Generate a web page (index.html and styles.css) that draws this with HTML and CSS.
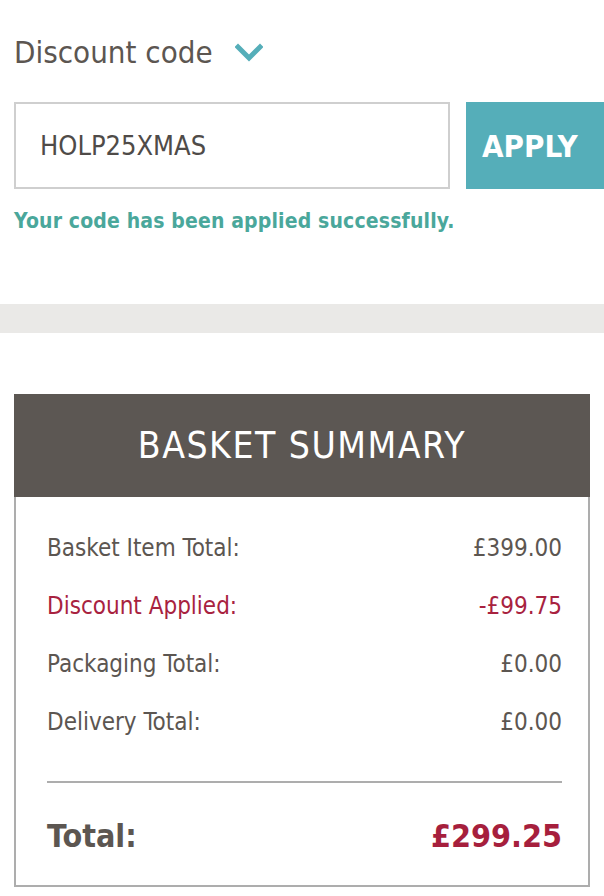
FILE: index.html
```html
<!DOCTYPE html>
<html lang="en">

<head>
    <meta charset="UTF-8">
    <meta name="viewport" content="width=device-width, initial-scale=1.0">
    <title>Basket</title>
    <link rel="stylesheet" href="styles.css">
</head>

<body>
    <div class="discount">
        <div class="discount-title">
            <span>Discount code</span>
            <svg class="chevron" width="28" height="20" viewBox="0 0 28 20">
                <path d="M3 4 L14 15 L25 4" fill="none" stroke="#55aeb9" stroke-width="5" stroke-linecap="square" />
            </svg>
        </div>
        <form class="code-form" action="">
            <input class="code-input" type="text" value="HOLP25XMAS">
            <button class="apply-btn" type="submit">APPLY</button>
        </form>
        <p class="success">Your code has been applied successfully.</p>
    </div>

    <div class="divider-band"></div>

    <div class="summary">
        <div class="summary-head">BASKET SUMMARY</div>
        <div class="summary-body">
            <div class="row">
                <span>Basket Item Total:</span>
                <span>&pound;399.00</span>
            </div>
            <div class="row discount-row">
                <span>Discount Applied:</span>
                <span>-&pound;99.75</span>
            </div>
            <div class="row">
                <span>Packaging Total:</span>
                <span>&pound;0.00</span>
            </div>
            <div class="row">
                <span>Delivery Total:</span>
                <span>&pound;0.00</span>
            </div>
            <div class="total-row">
                <span>Total:</span>
                <span class="total-value">&pound;299.25</span>
            </div>
        </div>
    </div>
</body>

</html>
```

FILE: styles.css
```css
body {
    margin: 0;
    font-family: "DejaVu Sans Condensed", "DejaVu Sans", sans-serif;
    font-stretch: condensed;
    color: #5c5651;
    background: #fff;
    overflow: hidden;
}

.discount {
    padding: 34px 0 0 14px;
}

.discount-title {
    display: flex;
    align-items: center;
    font-size: 31px;
    height: 36px;
}

.chevron {
    margin-left: 22px;
    margin-top: 2px;
}

.code-form {
    display: flex;
    margin-top: 32px;
}

.code-input {
    box-sizing: border-box;
    width: 436px;
    height: 87px;
    border: 2px solid #cfcfcf;
    padding: 0 0 0 24px;
    font-family: inherit;
    font-stretch: condensed;
    font-size: 27px;
    color: #4f4b48;
    outline: none;
}

.apply-btn {
    box-sizing: border-box;
    width: 138px;
    height: 87px;
    margin-left: 16px;
    border: none;
    background: #55aeb9;
    color: #fff;
    font-family: inherit;
    font-stretch: condensed;
    font-weight: bold;
    font-size: 31px;
    text-align: left;
    padding: 0 0 0 16px;
}

.success {
    margin: 20px 0 0;
    color: #4aa79b;
    font-weight: bold;
    font-size: 21px;
    letter-spacing: 0.15px;
}

.divider-band {
    height: 29px;
    margin-top: 71px;
    background: #eae9e7;
}

.summary {
    margin: 61px 14px 0;
}

.summary-head {
    height: 103px;
    background: #5c5753;
    color: #fff;
    font-size: 37px;
    letter-spacing: 1.5px;
    display: flex;
    align-items: center;
    justify-content: center;
}

.summary-body {
    border: 2px solid #adadad;
    border-top: none;
    padding: 22px 26px 0 31px;
    height: 390px;
    box-sizing: border-box;
}

.row {
    display: flex;
    justify-content: space-between;
    height: 58px;
    align-items: center;
    font-size: 24px;
}

.discount-row {
    color: #a8223f;
}

.total-row {
    display: flex;
    justify-content: space-between;
    align-items: center;
    border-top: 2px solid #adadad;
    margin-top: 30px;
    height: 106px;
    font-size: 32px;
    font-weight: bold;
}

.total-value {
    color: #a61f3d;
}
```
